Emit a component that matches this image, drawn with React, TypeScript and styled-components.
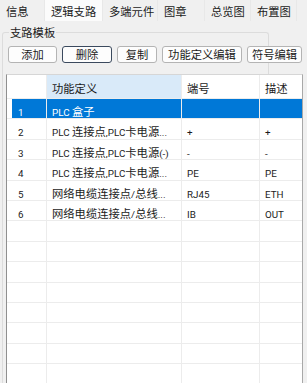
import React from 'react';
import styled, { createGlobalStyle } from 'styled-components';

const GlobalStyle = createGlobalStyle`
  html, body {
    margin: 0;
    padding: 0;
    background: #f0f0f0;
    overflow: hidden;
  }
  body {
    font-family: "Noto Sans CJK SC", "Noto Sans", sans-serif;
    font-size: 11.3px;
    color: #1b1b1b;
  }
  * {
    box-sizing: border-box;
  }
`;

const Window = styled.div`
  width: 307px;
  height: 383px;
  display: flex;
  flex-direction: column;
  overflow: hidden;
  background: #f0f0f0;
`;

const TabBar = styled.div`
  display: flex;
  height: 21px;
  flex-shrink: 0;
`;

interface TabProps {
  $w: number;
  $active?: boolean;
}

const Tab = styled.div<TabProps>`
  width: ${({ $w }) => $w}px;
  height: 21px;
  padding-left: 6px;
  display: flex;
  align-items: center;
  white-space: nowrap;
  background: ${({ $active }) => ($active ? '#fbfbfb' : '#f0f0f0')};
  border-right: 1px solid #e8e8e8;
`;

const Group = styled.fieldset`
  margin: 3px 0 0 2px;
  width: 267px;
  min-width: 0;
  flex: 1;
  padding: 0 0 0 3px;
  border: 1px solid #dcdcdc;
  border-bottom: none;
  border-radius: 3px 3px 0 0;
`;

const Legend = styled.legend`
  margin-left: 3px;
  padding: 0 1px;
  line-height: 16px;
`;

const ButtonRow = styled.div`
  display: flex;
  gap: 5px;
  padding: 6px 0 0 2px;
  width: 300px;
`;

interface ButtonProps {
  $w: number;
  $focused?: boolean;
}

const Button = styled.button<ButtonProps>`
  width: ${({ $w }) => $w}px;
  height: 17px;
  flex-shrink: 0;
  padding: 0;
  font: inherit;
  color: #1b1b1b;
  line-height: 15px;
  background: #fdfdfd;
  border: 1px solid ${({ $focused }) => ($focused ? '#3b4a5e' : '#b4b4b4')};
  border-radius: 3px;
`;

const Table = styled.div`
  margin-top: 11px;
  width: 297px;
  background: #fff;
  border-top: 1px solid #d6d6d6;
  border-left: 1px solid #8f8f8f;
  border-right: 1px solid #a8a8a8;
`;

const columns = '40px 135px 78px 42px';

interface RowProps {
  $header?: boolean;
}

const Row = styled.div<RowProps>`
  display: grid;
  grid-template-columns: ${columns};
  height: ${({ $header }) => ($header ? '24px' : '20.4px')};
`;

interface CellProps {
  $selected?: boolean;
  $index?: boolean;
  $sorted?: boolean;
}

const Cell = styled.div<CellProps>`
  padding: 2px 0 0 ${({ $index }) => ($index ? '11px' : '5px')};
  line-height: 20px;
  white-space: nowrap;
  overflow: hidden;
  border-right: 1px solid #ececec;
  border-bottom: 1px solid #ececec;
  color: ${({ $selected }) => ($selected ? '#fff' : '#1b1b1b')};
  background: ${({ $selected, $index, $sorted }) =>
    $selected
      ? $index
        ? 'linear-gradient(to right, #fff 5px, #0078d7 5px)'
        : '#0078d7'
      : $sorted
        ? '#d9eaf9'
        : '#fff'};

  &:last-child {
    border-right: none;
  }
`;

const HeaderCell = styled(Cell)`
  line-height: 22px;
`;

// latin runs are drawn smaller and narrower than the CJK glyphs, as in the UI font
const Latin = styled.span`
  font-family: Roboto, "Liberation Sans", sans-serif;
  font-size: 9.8px;
`;

const Mixed = ({ text }: { text: string }) => (
  <>
    {text.split(/([\u3000-\u9fff\uff00-\uffef]+)/).map((part, i) =>
      !part ? null : /[\u3000-\u9fff\uff00-\uffef]/.test(part) ? (
        <span key={i}>{part}</span>
      ) : (
        <Latin key={i}>{part}</Latin>
      )
    )}
  </>
);

const tabs = [
  { label: '信息', w: 45 },
  { label: '逻辑支路', w: 58, active: true },
  { label: '多端元件', w: 55 },
  { label: '图章', w: 47 },
  { label: '总览图', w: 46 },
  { label: '布置图', w: 46 },
];

const buttons = [
  { label: '添加', w: 49 },
  { label: '删除', w: 50, focused: true },
  { label: '复制', w: 40 },
  { label: '功能定义编辑', w: 80 },
  { label: '符号编辑', w: 55 },
];

const rows = [
  { name: 'PLC 盒子', pin: '', desc: '' },
  { name: 'PLC 连接点,PLC卡电源...', pin: '+', desc: '+' },
  { name: 'PLC 连接点,PLC卡电源(-)', pin: '-', desc: '-' },
  { name: 'PLC 连接点,PLC卡电源...', pin: 'PE', desc: 'PE' },
  { name: '网络电缆连接点/总线...', pin: 'RJ45', desc: 'ETH' },
  { name: '网络电缆连接点/总线...', pin: 'IB', desc: 'OUT' },
];

const EMPTY_ROWS = 9;

export default function App() {
  return (
    <Window>
      <GlobalStyle />
      <TabBar>
        {tabs.map(t => (
          <Tab key={t.label} $w={t.w} $active={t.active}>{t.label}</Tab>
        ))}
      </TabBar>
      <Group>
        <Legend>支路模板</Legend>
        <ButtonRow>
          {buttons.map(b => (
            <Button key={b.label} $w={b.w} $focused={b.focused}>{b.label}</Button>
          ))}
        </ButtonRow>
        <Table>
          <Row $header>
            <HeaderCell $index />
            <HeaderCell $sorted>功能定义</HeaderCell>
            <HeaderCell>端号</HeaderCell>
            <HeaderCell>描述</HeaderCell>
          </Row>
          {rows.map((r, i) => {
            const selected = i === 0;
            return (
              <Row key={i}>
                <Cell $index $selected={selected}><Mixed text={String(i + 1)} /></Cell>
                <Cell $selected={selected}><Mixed text={r.name} /></Cell>
                <Cell $selected={selected}><Mixed text={r.pin} /></Cell>
                <Cell $selected={selected}><Mixed text={r.desc} /></Cell>
              </Row>
            );
          })}
          {Array.from({ length: EMPTY_ROWS }).map((_, i) => (
            <Row key={'e' + i}>
              <Cell $index />
              <Cell />
              <Cell />
              <Cell />
            </Row>
          ))}
        </Table>
      </Group>
    </Window>
  );
}
